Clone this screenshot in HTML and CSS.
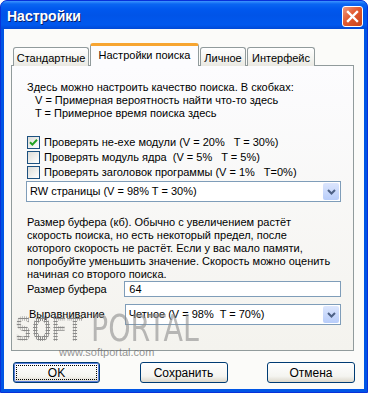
FILE: index.html
```html
<!DOCTYPE html>
<html lang="ru">
<head>
    <meta charset="UTF-8">
    <title>Настройки</title>
    <link rel="stylesheet" href="styles.css">
</head>
<body>
    <div class="window">
        <!-- заголовок окна -->
        <div class="titlebar">
            <span class="title">Настройки</span>
            <span class="close">
                <svg width="13" height="13" viewBox="0 0 13 13"><path d="M2 2 L11 11 M11 2 L2 11" stroke="#fff" stroke-width="2.4" stroke-linecap="square"/></svg>
            </span>
        </div>

        <div class="client">
            <div class="tabs">
                <div class="tab t1">Стандартные</div>
                <div class="tab active t2">Настройки поиска</div>
                <div class="tab t3">Личное</div>
                <div class="tab t4">Интерфейс</div>
            </div>

            <div class="pane">
                <p class="intro">Здесь можно настроить качество поиска. В скобках:<br><span class="ind">V = Примерная вероятность найти что-то здесь</span><br><span class="ind">T = Примерное время поиска здесь</span></p>

                <div class="checks">
                    <div class="check"><span class="box"><svg width="9" height="9" viewBox="0 0 9 9"><path d="M1 4.2 L3.4 6.6 L8 1.8" fill="none" stroke="#21a121" stroke-width="2"/></svg></span><span class="ctext">Проверять не-exe модули (V = 20%   T = 30%)</span></div>
                    <div class="check"><span class="box"></span><span class="ctext">Проверять модуль ядра  (V = 5%   T = 5%)</span></div>
                    <div class="check"><span class="box"></span><span class="ctext">Проверять заголовок программы (V = 1%   T=0%)</span></div>
                </div>

                <div class="combo wide">
                    <span class="value">RW страницы (V = 98% T = 30%)</span>
                    <span class="drop"><svg width="9" height="6" viewBox="0 0 9 6"><path d="M1 1 L4.5 4.5 L8 1" fill="none" stroke="#4d6185" stroke-width="2"/></svg></span>
                </div>

                <p class="para">Размер буфера (кб). Обычно с увеличением растёт<br>скорость поиска, но есть некоторый предел, после<br>которого скорость не растёт. Если у вас мало памяти,<br>попробуйте уменьшить значение. Скорость можно оценить<br>начиная со второго поиска.</p>

                <div class="field buffer">
                    <span class="label">Размер буфера</span>
                    <div class="input">64</div>
                </div>

                <div class="field align">
                    <span class="label">Выравнивание</span>
                    <div class="combo narrow">
                        <span class="value">Четное (V = 98%  T = 70%)</span>
                        <span class="drop"><svg width="9" height="6" viewBox="0 0 9 6"><path d="M1 1 L4.5 4.5 L8 1" fill="none" stroke="#4d6185" stroke-width="2"/></svg></span>
                    </div>
                </div>

                <!-- водяной знак поверх содержимого -->
                <div class="watermark">
                    <div class="wm-logo"><span class="wm-soft">SOFT</span><span class="wm-portal">PORTAL</span></div>
                    <div class="wm-url">www.softportal.com</div>
                </div>
            </div>

            <div class="buttons">
                <div class="btn default"><span class="focus">OK</span></div>
                <div class="btn">Сохранить</div>
                <div class="btn">Отмена</div>
            </div>
        </div>
    </div>
</body>
</html>
```

FILE: styles.css
```css
/* --- общее --- */
body {
    margin: 0;
    background: #ffffff;
    font-family: "Liberation Sans", Arial, sans-serif;
    font-size: 11px;
    color: #000000;
}

/* --- окно --- */
.window {
    width: 368px;
    height: 393px;
    box-sizing: border-box;
    background: #0055e5;
    border-radius: 7px 7px 0 0;
    border: 1px solid #0831d9;
    display: flex;
    flex-direction: column;
    overflow: hidden;
}

.titlebar {
    height: 28px;
    display: flex;
    align-items: center;
    justify-content: space-between;
    padding: 0 4px 0 6px;
    background: linear-gradient(#3d95ff 0, #0a66f2 3px, #0058ee 8px, #0054e8 50%, #0058ee 85%, #0049d6 100%);
}

.title {
    color: #ffffff;
    font-weight: bold;
    font-size: 14px;
    text-shadow: 1px 1px 0 #0a1e6a;
    padding-top: 1px;
}

.close {
    width: 19px;
    height: 19px;
    border: 1px solid #ffffff;
    border-radius: 3px;
    background: linear-gradient(135deg, #f09a7f 0, #e2592f 45%, #c9441b 100%);
    display: flex;
    align-items: center;
    justify-content: center;
    margin-top: 3px;
}

.client {
    flex: 1;
    margin: 0 3px 3px 3px;
    background: #fbfbf9;
    padding: 15px 10px 0 7px;
}

/* --- вкладки --- */
.tabs {
    display: flex;
    align-items: flex-end;
    height: 22px;
    padding-left: 2px;
    margin-bottom: -1px;
    position: relative;
    z-index: 1;
}

.tab {
    box-sizing: border-box;
    height: 19px;
    border: 1px solid #919b9c;
    border-bottom: none;
    border-radius: 3px 3px 0 0;
    background: linear-gradient(#ffffff, #f3f3ef 60%, #e9e8e2);
    display: flex;
    align-items: center;
    justify-content: center;
    font-size: 11px;
    white-space: nowrap;
    margin-right: 1px;
    padding-top: 1px;
}

.t1 { width: 76px; }
.t2 { width: 109px; }
.t3 { width: 46px; }
.t4 { width: 68px; }

.tab.active {
    height: 23px;
    background: #fcfcfe;
    border-top: 3px solid #f7a531;
    padding-top: 0;
    padding-bottom: 3px;
}

/* --- панель вкладки --- */
.pane {
    position: relative;
    height: 286px;
    box-sizing: border-box;
    border: 1px solid #919b9c;
    background: linear-gradient(#fcfcfe, #f4f3ee);
    padding: 15px 12px 0 15px;
    line-height: 13px;
}

.intro, .para {
    margin: 0;
    white-space: nowrap;
}

.ind {
    padding-left: 8px;
}

.checks {
    margin-top: 15px;
}

.check {
    height: 15px;
    display: flex;
    align-items: center;
    white-space: pre;
}

.box {
    width: 11px;
    height: 11px;
    border: 1px solid #1c5180;
    background: linear-gradient(135deg, #dcdcd7, #ffffff);
    margin-right: 4px;
    display: flex;
    align-items: center;
    justify-content: center;
}

/* --- выпадающие списки --- */
.combo {
    box-sizing: border-box;
    height: 21px;
    border: 1px solid #7f9db9;
    background: #ffffff;
    display: flex;
    align-items: center;
    justify-content: space-between;
    padding: 1px 1px 1px 3px;
    white-space: pre;
}

.combo.wide {
    width: 315px;
    margin: 1px 0 0 -1px;
}

.drop {
    width: 16px;
    height: 17px;
    border-radius: 2px;
    background: linear-gradient(#dce6fd, #b8cdfa);
    display: flex;
    align-items: center;
    justify-content: center;
}

.para {
    margin-top: 14px;
}

/* --- поля --- */
.field {
    display: flex;
    align-items: center;
}

.field .label {
    width: 98px;
}

.buffer {
    height: 16px;
}

.input {
    box-sizing: border-box;
    width: 218px;
    height: 16px;
    border: 1px solid #7f9db9;
    background: #ffffff;
    padding: 0 4px;
    line-height: 14px;
}

.align {
    margin-top: 7px;
}

.align .label {
    padding-left: 2px;
    width: 96px;
}

.combo.narrow {
    width: 217px;
}

/* --- водяной знак --- */
.watermark {
    position: absolute;
    left: 3px;
    top: 248px;
    pointer-events: none;
}

.wm-logo {
    display: flex;
    align-items: flex-end;
    height: 30px;
}

.wm-soft {
    font-family: "DejaVu Sans", sans-serif;
    font-weight: bold;
    font-size: 34px;
    line-height: 30px;
    padding-right: 6px;
    color: transparent;
    background: radial-gradient(circle, rgba(110,110,110,0.8) 1px, transparent 1.4px) 0 0 / 3px 3px;
    -webkit-background-clip: text;
    background-clip: text;
    transform: scaleX(0.68);
    transform-origin: left bottom;
    display: inline-block;
    white-space: nowrap;
    margin-right: -30px;
}

.wm-portal {
    font-family: "DejaVu Sans", sans-serif;
    font-weight: normal;
    font-size: 37px;
    line-height: 30px;
    color: rgba(140,140,140,0.6);
    transform: scaleX(0.77);
    transform-origin: left bottom;
    display: inline-block;
    white-space: nowrap;
}

.wm-url {
    margin: 2px 0 0 44px;
    font-size: 11px;
    color: rgba(110,110,110,0.75);
}

/* --- кнопки --- */
.buttons {
    display: flex;
    justify-content: space-between;
    margin: 11px -1px 0 2px;
}

.btn {
    box-sizing: border-box;
    width: 88px;
    height: 21px;
    border: 1px solid #003c74;
    border-radius: 3px;
    background: linear-gradient(#ffffff, #f4f4f0 70%, #dcd7cb);
    display: flex;
    align-items: center;
    justify-content: center;
    font-size: 12px;
}

.btn.default {
    width: 87px;
    box-shadow: inset 0 0 0 1px #5a7edc;
    padding: 2px;
}

.focus {
    flex: 1;
    align-self: stretch;
    border: 1px dotted #000000;
    display: flex;
    align-items: center;
    justify-content: center;
}
```
